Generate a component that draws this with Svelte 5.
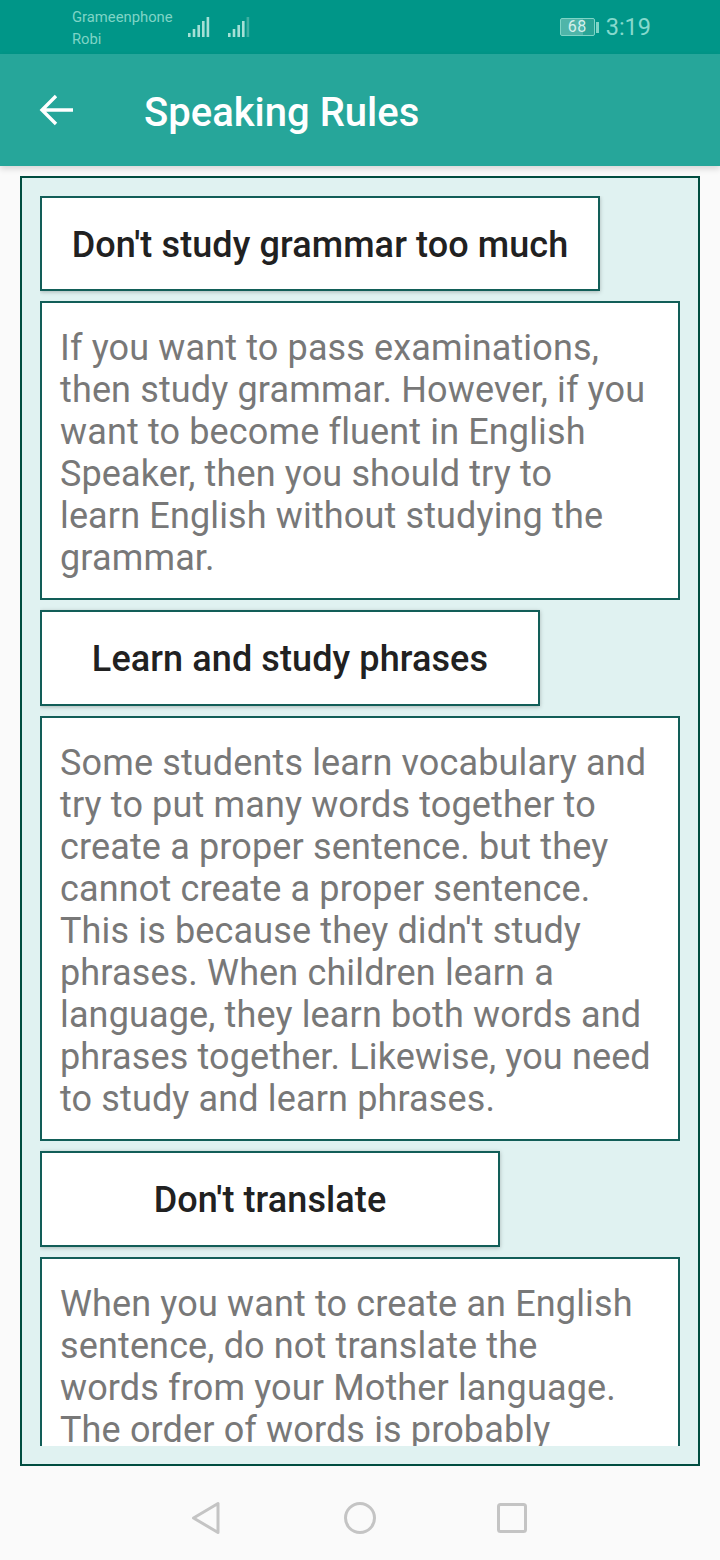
<script lang="ts">
  const rules = [
    {
      title: "Don't study grammar too much",
      width: 560,
      lines: [
        "If you want to pass examinations,",
        "then study grammar. However, if you",
        "want to become fluent in English",
        "Speaker, then you should try to",
        "learn English without studying the",
        "grammar.",
      ],
    },
    {
      title: "Learn and study phrases",
      width: 500,
      lines: [
        "Some students learn vocabulary and",
        "try to put many words together to",
        "create a proper sentence. but they",
        "cannot create a proper sentence.",
        "This is because they didn't study",
        "phrases. When children learn a",
        "language, they learn both words and",
        "phrases together. Likewise, you need",
        "to study and learn phrases.",
      ],
    },
    {
      title: "Don't translate",
      width: 460,
      lines: [
        "When you want to create an English",
        "sentence, do not translate the",
        "words from your Mother language.",
        "The order of words is probably",
      ],
    },
  ];

  // signal bars: x offset and top of each bar, the bottom is shared
  const bars = [
    { x: 0, top: 16 },
    { x: 4.7, top: 12 },
    { x: 9.4, top: 8 },
    { x: 14, top: 4 },
    { x: 18.6, top: 0 },
  ];
</script>

<div class="screen">
  <header class="status">
    <div class="carriers">
      <span>Grameenphone</span>
      <span>Robi</span>
    </div>
    <svg class="signal" width="22" height="20" viewBox="0 0 22 20" aria-hidden="true">
      {#each bars as b}
        <rect x={b.x} y={b.top} width="2.6" height={20 - b.top} />
      {/each}
    </svg>
    <svg class="signal second" width="22" height="20" viewBox="0 0 22 20" aria-hidden="true">
      {#each bars as b, i}
        <rect class:dim={i === 4} x={b.x} y={b.top} width="2.6" height={20 - b.top} />
      {/each}
    </svg>
    <div class="right">
      <div class="battery">
        <span class="cell">68</span>
        <span class="nub"></span>
      </div>
      <span class="time">3:19</span>
    </div>
  </header>

  <div class="toolbar">
    <svg class="back" width="36" height="32" viewBox="0 0 36 32" aria-hidden="true">
      <path d="M2.5 16H34M17 2 3 16l14 14" fill="none" stroke="#fff" stroke-width="3.4" />
    </svg>
    <h1>Speaking Rules</h1>
  </div>

  <main class="frame">
    <div class="scroll">
      {#each rules as rule}
        <h2 class="heading" style="width: {rule.width}px">{rule.title}</h2>
        <div class="body">
          {#each rule.lines as line}
            <div>{line}</div>
          {/each}
        </div>
      {/each}
    </div>
  </main>

  <nav class="navbar">
    <svg class="tri" width="32" height="36" viewBox="0 0 32 36" aria-hidden="true">
      <path d="M28 3.5v29L3.5 18z" />
    </svg>
    <svg class="circle" width="36" height="36" viewBox="0 0 36 36" aria-hidden="true">
      <circle cx="18" cy="18" r="14.5" />
    </svg>
    <svg class="square" width="32" height="32" viewBox="0 0 32 32" aria-hidden="true">
      <rect x="2.5" y="2.5" width="27" height="27" rx="2" />
    </svg>
  </nav>
</div>

<style>
  :global(body) {
    margin: 0;
    background: #fafafa;
  }

  .screen {
    width: 720px;
    height: 1560px;
    display: flex;
    flex-direction: column;
    overflow: hidden;
    font-family: Roboto, "Liberation Sans", sans-serif;
  }

  /* status bar */
  .status {
    height: 54px;
    flex: none;
    display: flex;
    align-items: center;
    padding-left: 72px;
    background: #009688;
    color: #7fd4c6;
  }
  .carriers {
    display: flex;
    flex-direction: column;
    width: 116px;
    padding-top: 1px;
    font-size: 14.8px;
    line-height: 22px;
  }
  .signal {
    fill: #a5e0d6;
    margin-top: 0;
  }
  .signal.second {
    margin-left: 18px;
  }
  .signal .dim {
    fill: #3fb0a2;
  }
  .right {
    margin-left: auto;
    display: flex;
    align-items: center;
    padding-right: 69px;
    gap: 7px;
  }
  .battery {
    display: flex;
    align-items: center;
    gap: 1px;
  }
  .cell {
    width: 35px;
    height: 18px;
    box-sizing: border-box;
    border: 1px solid #7fd4c6;
    border-radius: 2px;
    background: linear-gradient(90deg, #4fb5a9 68%, #2aa496 68%);
    color: #d5f0ec;
    font-size: 16px;
    line-height: 16px;
    letter-spacing: 0.5px;
    text-align: center;
  }
  .nub {
    width: 3px;
    height: 11px;
    background: #7fd4c6;
  }
  .time {
    font-size: 23.5px;
    color: #86d9cd;
  }

  /* toolbar */
  .toolbar {
    height: 112px;
    flex: none;
    display: flex;
    align-items: center;
    padding-left: 39px;
    background: #26a69a;
    box-shadow: 0 3px 6px rgba(0, 0, 0, 0.14);
    position: relative;
  }
  .toolbar h1 {
    margin: 4px 0 0 69px;
    font-size: 40px;
    font-weight: 500;
    color: #fff;
  }

  /* content */
  .frame {
    height: 1290px;
    flex: none;
    box-sizing: border-box;
    margin: 10px 20px 0;
    padding: 17.8px 18px 0;
    border: 2px solid #004d40;
    background: #e0f2f1;
  }
  .scroll {
    height: 1250.2px;
    overflow: hidden;
  }
  .heading {
    box-sizing: border-box;
    height: 95.6px;
    margin: 0 0 10px;
    border: 2px solid #125e58;
    background: #fff;
    box-shadow: 0 1px 4px rgba(0, 0, 0, 0.25);
    color: #212121;
    font-size: 36px;
    font-weight: 500;
    letter-spacing: 0.1px;
    line-height: 94.8px;
    text-align: center;
    white-space: nowrap;
  }
  .body {
    box-sizing: border-box;
    margin-bottom: 10px;
    padding: 24px 18px 19px;
    border: 2px solid #125e58;
    background: #fff;
    color: #787878;
    font-size: 36px;
    letter-spacing: 0.14px;
    line-height: 42px;
    white-space: nowrap;
  }

  /* nav bar */
  .navbar {
    flex: 1;
    display: flex;
    align-items: center;
    padding: 10px 0 0 190px;
  }
  .navbar svg {
    fill: none;
    stroke: #c4c4c4;
    stroke-width: 3;
    stroke-linejoin: round;
  }
  .navbar .circle {
    margin: 0 118px 0 120px;
  }
</style>
